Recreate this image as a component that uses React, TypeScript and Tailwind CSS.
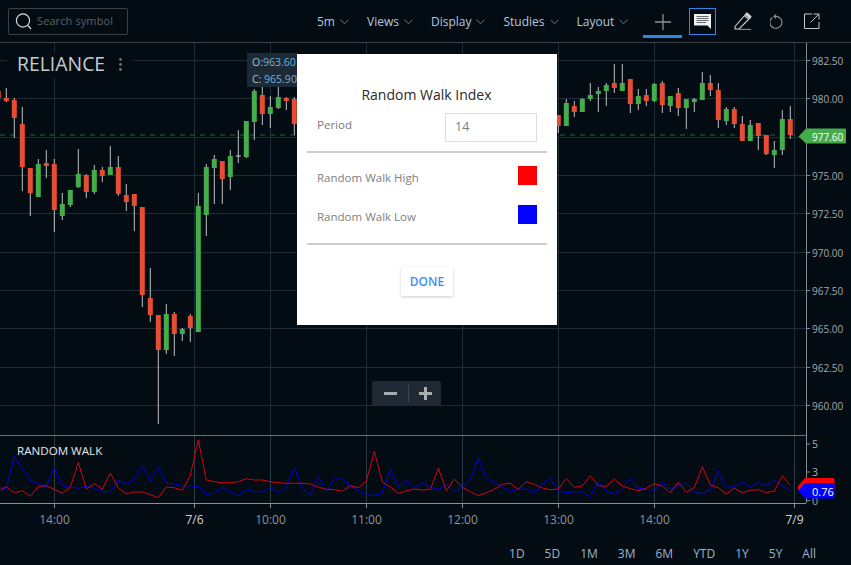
import React from "react";

const G = "#45ac4b";
const R = "#e74c34";
// [center x, colour, wick top, body top, body bottom, wick bottom]
const candles: [number, string, number, number, number, number][] = [
  [-1.7, R, 88, 91, 98, 98],
  [6.3, R, 88, 98, 101, 102],
  [14.3, R, 98, 100, 118, 138],
  [22.3, R, 107, 124, 167, 191],
  [30.3, R, 168, 168, 193, 216],
  [38.3, G, 159, 164, 197, 197],
  [46.3, R, 150, 163, 166, 178],
  [54.3, R, 159, 164, 210, 232],
  [62.3, G, 193, 204, 216, 220],
  [70.3, G, 190, 190, 205, 207],
  [78.3, G, 149, 174, 187, 188],
  [86.3, R, 174, 175, 192, 198],
  [94.3, G, 165, 170, 192, 194],
  [102.3, R, 167, 170, 176, 182],
  [110.3, G, 146, 167, 175, 175],
  [118.3, R, 156, 167, 194, 196],
  [126.3, R, 184, 195, 202, 211],
  [134.3, R, 194, 194, 206, 231],
  [142.3, R, 207, 207, 295, 307],
  [150.3, R, 268, 298, 315, 322],
  [158.3, R, 315, 315, 350, 424],
  [166.3, G, 304, 314, 350, 354],
  [174.3, R, 312, 314, 334, 356],
  [182.3, G, 328, 329, 334, 341],
  [190.3, R, 314, 316, 328, 342],
  [198.3, G, 193, 206, 332, 332],
  [206.3, G, 164, 167, 215, 236],
  [214.3, G, 155, 159, 168, 204],
  [222.3, R, 161, 161, 179, 204],
  [230.3, G, 150, 156, 177, 190],
  [238.3, "#dddddd", 130, 156, 157, 163],
  [246.3, G, 121, 121, 157, 158],
  [254.3, G, 89, 91, 122, 140],
  [262.3, R, 87, 95, 114, 125],
  [270.3, G, 96, 107, 114, 128],
  [278.3, G, 85, 97, 108, 109],
  [286.3, R, 97, 98, 101, 110],
  [294.3, R, 97, 99, 124, 135],
  [558.3, R, 115, 115, 126, 133],
  [566.3, G, 99, 103, 126, 126],
  [574.3, R, 101, 106, 112, 117],
  [582.3, G, 98, 99, 112, 112],
  [590.3, G, 83, 95, 99, 101],
  [598.3, G, 87, 91, 94, 112],
  [606.3, G, 83, 85, 91, 106],
  [614.3, R, 64, 83, 88, 93],
  [622.3, G, 64, 83, 91, 91],
  [630.3, R, 79, 79, 104, 113],
  [638.3, G, 89, 96, 104, 110],
  [646.3, R, 89, 95, 101, 106],
  [654.3, G, 83, 84, 101, 102],
  [662.3, R, 81, 83, 105, 113],
  [670.3, G, 96, 96, 106, 112],
  [678.3, R, 88, 93, 108, 116],
  [686.3, G, 99, 99, 108, 129],
  [694.3, G, 98, 99, 102, 112],
  [702.3, G, 72, 83, 100, 100],
  [710.3, R, 75, 83, 90, 96],
  [718.3, R, 83, 90, 120, 128],
  [726.3, G, 107, 109, 121, 125],
  [734.3, R, 107, 109, 124, 128],
  [742.3, R, 116, 124, 141, 141],
  [750.3, G, 120, 125, 141, 141],
  [758.3, R, 123, 123, 136, 150],
  [766.3, R, 135, 135, 154, 155],
  [774.3, G, 141, 150, 155, 168],
  [782.3, G, 110, 119, 150, 155],
  [790.3, R, 106, 119, 135, 139],
];

const redA = [183,170,188,182,199,169,167,178,190,172,97,177,161,177,129,175,191,186,186,194,203,171,173,181,136,30,150,155,158,158,155,146,150,150,155,158,160,160,160,162,171,178,179,184,167,173,154,64,156,171,190,183,177,180];
const blueA = [172,176,78,115,152,162,171,110,167,170,175,169,174,184,186,150,161,149,105,152,110,160,162,167,167,170,193,190,174,186,197,179,185,185,172,188,170,111,174,196,140,185,147,147,168,181,195,196,189,118,170,153,172,158];
const redB = [178,115,182,147,172,185,197,188,178,163,160,178,155,163,174,179,177,146,172,168,137,167,169,147,168,176,182,175,161,168,188,157,187,173,110,165,173,192,174,188,181,179,188,183,137,167];
const blueB = [172,181,162,184,170,150,82,146,156,172,184,177,178,188,163,145,182,188,185,186,200,155,182,192,175,145,175,178,181,157,178,165,159,185,192,178,121,172,170,155,171,157,167,151,167,182];

const pts = (a: number[], b: number[]) =>
  [
    ...a.map((v, i) => [(-5 + 24 * i) / 3, 430 + v / 3]),
    ...b.map((v, i) => [430 + (1 + 24 * i) / 3, 430 + v / 3]),
  ]
    .map(([x, y]) => `${x.toFixed(1)},${y.toFixed(1)}`)
    .join(" ");

const hLines = [60.5, 98.5, 137.5, 175.5, 213.5, 252.5, 290.5, 328.5, 367.5, 405.5];
const vLines = [54.5, 194.5, 270.5, 366.5, 462.5, 558.5, 654.5, 794.5];
const prices: [string, number][] = [
  ["982.50", 61],
  ["980.00", 99],
  ["975.00", 176],
  ["972.50", 214],
  ["970.00", 253],
  ["967.50", 291],
  ["965.00", 329],
  ["962.50", 368],
  ["960.00", 406],
];
const times: [string, number, boolean][] = [
  ["14:00", 54.5, false],
  ["7/6", 194.5, true],
  ["10:00", 270.5, false],
  ["11:00", 366.5, false],
  ["12:00", 462.5, false],
  ["13:00", 558.5, false],
  ["14:00", 654.5, false],
  ["7/9", 794.5, true],
];

function Chevron() {
  return (
    <svg width="9" height="6" viewBox="0 0 9 6" fill="none" stroke="#6f7a84" strokeWidth="1">
      <path d="M0.5 0.8 4.5 4.8 8.5 0.8" />
    </svg>
  );
}

function Menu({ label }: { label: string }) {
  return (
    <div className="flex items-center gap-[5px] text-[12px] text-[#b4c8dc]">
      <span>{label}</span>
      <Chevron />
    </div>
  );
}

function Chart() {
  return (
    <svg width="851" height="490" viewBox="0 43 851 490" className="block" fontFamily="'Open Sans', sans-serif">
      {hLines.map((y) => (
        <line key={y} x1="0" x2="806" y1={y} y2={y} stroke="#1e2c37" />
      ))}
      {vLines.map((x) => (
        <g key={x}>
          <line x1={x} x2={x} y1="43" y2="435" stroke="#1e2c37" />
          <line x1={x} x2={x} y1="436" y2="503" stroke="#2a3a46" />
          <line x1={x} x2={x} y1="503" y2="508" stroke="#8b8f93" />
        </g>
      ))}
      <rect x="7" y="53" width="126" height="25" fill="#030b13" />
      <line x1="0" x2="806" y1="135" y2="135" stroke="#2f6238" strokeDasharray="5 5" />

      {candles.map(([x, c, wt, bt, bb, wb]) => (
        <g key={x}>
          <line x1={x} x2={x} y1={wt} y2={wb} stroke="#d6d6d6" strokeWidth="0.9" />
          {c === "#dddddd" ? (
            <line x1={x - 2.5} x2={x + 2.5} y1={bt} y2={bt} stroke="#d6d6d6" />
          ) : (
            <rect x={x - 2.5} y={bt} width="5" height={bb - bt} fill={c} />
          )}
        </g>
      ))}

      <line x1="0" x2="806" y1="435.5" y2="435.5" stroke="#6b6f72" />
      <line x1="0" x2="806" y1="503.5" y2="503.5" stroke="#8b8f93" />
      <line x1="806.5" x2="806.5" y1="43" y2="503" stroke="#85898c" />
      <line x1="0" x2="851" y1="533.5" y2="533.5" stroke="#33393d" />

      <polyline points={pts(blueA, blueB)} fill="none" stroke="#0000e6" strokeWidth="1" />
      <polyline points={pts(redA, redB)} fill="none" stroke="#dc0010" strokeWidth="1" />

      {prices.map(([t, y]) => (
        <g key={t}>
          <line x1="806" x2="810" y1={y - 0.5} y2={y - 0.5} stroke="#85898c" />
          <text x="812" y={y + 4} fontSize="10" fill="#a5a9ad">
            {t}
          </text>
        </g>
      ))}
      {[
        ["5", 444],
        ["3", 472],
        ["0", 500.5],
      ].map(([t, y]) => (
        <g key={t as string}>
          <line x1="806" x2="810" y1={y} y2={y} stroke="#85898c" />
          <text x="812" y={(y as number) + 4} fontSize="10.5" fill="#a5a9ad">
            {t}
          </text>
        </g>
      ))}

      <path d="M798.5 136.5 806 128.5H845Q846 128.5 846 130V142Q846 143.5 845 143.5H806Z" fill="#45ac4b" />
      <text x="812" y="140.5" fontSize="10" fill="#ffffff">
        977.60
      </text>

      <path d="M798 486 805 478H833Q834.5 478 834.5 480V490H798Z" fill="#ff0000" />
      <path d="M798 491 805 483H833Q834.5 483 834.5 485V497Q834.5 498.5 833 498.5H805Z" fill="#0000ff" />
      <text x="812" y="496" fontSize="11" fill="#ffffff">
        0.76
      </text>

      {times.map(([t, x, strong]) => (
        <text key={t + x} x={x} y="524" textAnchor="middle" fontSize="12" fill={strong ? "#d4d6d8" : "#8f9396"}>
          {t}
        </text>
      ))}

      <text x="17" y="71" fontSize="19.4" fill="#c8cbce">
        RELIANCE
      </text>
      <circle cx="120.5" cy="59.5" r="1.4" fill="#6d7276" />
      <circle cx="120.5" cy="64.5" r="1.4" fill="#6d7276" />
      <circle cx="120.5" cy="69.5" r="1.4" fill="#6d7276" />
      <text x="17" y="455" fontSize="11.6" fill="#e6e8ea">
        RANDOM WALK
      </text>
    </svg>
  );
}

export default function App() {
  return (
    <div className="relative flex h-[565px] w-[851px] flex-col overflow-hidden bg-[#030b13] font-['Open_Sans',sans-serif]">
      <header className="flex h-[43px] shrink-0 items-center border-b border-[#3a4044] pl-2">
        <div className="flex h-[27px] w-[120px] items-center gap-[5px] rounded-[2px] border border-[#3a4248] pl-[6px]">
          <svg width="17" height="19" viewBox="0 0 17 19" fill="none" stroke="#d8dadc" strokeWidth="1.2">
            <circle cx="8" cy="8.5" r="6.6" />
            <path d="M13 13.5 16 17" />
          </svg>
          <span className="text-[11px] tracking-[0.1px] text-[#5c6266]">Search symbol</span>
        </div>
        <nav className="ml-[189px] mt-[1px] flex items-center gap-[18px]">
          <Menu label="5m" />
          <Menu label="Views" />
          <Menu label="Display" />
          <Menu label="Studies" />
          <Menu label="Layout" />
        </nav>
        <div className="ml-[15px] flex h-[38px] w-[39px] items-start justify-center self-start border-b-[3px] border-[#2f86e6] pt-[14px]">
          <svg width="16" height="16" viewBox="0 0 16 16" stroke="#8d9296" strokeWidth="1.3">
            <path d="M8 0V16M0 8H16" />
          </svg>
        </div>
        <div className="ml-[7px] flex h-[27px] w-[27px] items-center justify-center border border-[#2f86e6]">
          <svg width="17" height="15" viewBox="0 0 17 15">
            <path d="M0 0H17V15L13.5 11.5H0Z" fill="#eef0f2" />
            <path d="M2.5 2.5H14.5M2.5 4.5H14.5M2.5 6.5H14.5M2.5 8.5H12" stroke="#63686d" strokeWidth="1" />
          </svg>
        </div>
        <svg className="ml-[18px]" width="18" height="18" viewBox="0 0 18 18" fill="none" stroke="#d2d4d6" strokeWidth="1.1">
          <path d="M1 14.5 11.5 2.5 16 6 5 17H1Z" />
          <path d="M10.5 3.8 14.8 7.2" />
          <path d="M5 17.4H17" stroke="#8d9296" />
          <path d="M11.5 2.5 13 1 17 4.5 16 6Z" fill="#d2d4d6" />
        </svg>
        <svg className="ml-[18px]" width="14" height="15" viewBox="0 0 14 15" fill="none" stroke="#8d9296" strokeWidth="1.1">
          <path d="M2.3 3.5A6 6 0 1 0 7 2.4H4.5" />
          <path d="M6 0.4 4 2.4 6 4.4" />
        </svg>
        <svg className="ml-[20px]" width="16" height="16" viewBox="0 0 16 16" fill="none" stroke="#c4c8cb" strokeWidth="1">
          <path d="M8 1H0.5V15.5H15V9" />
          <path d="M6.5 9.5 14.5 1.5M9.5 1H15V6.5" />
        </svg>
      </header>

      <Chart />

      <footer className="flex flex-1 items-center justify-end gap-5 pr-[35px] pt-[9px] text-[12px] text-[#9cb4ca]">
        {["1D", "5D", "1M", "3M", "6M", "YTD", "1Y", "5Y", "All"].map((t) => (
          <span key={t}>{t}</span>
        ))}
      </footer>

      <div className="absolute left-[247px] top-[53px] h-[34px] w-[50px] overflow-hidden whitespace-nowrap bg-[#1a2a36] pl-[5px] pt-[1px] text-[10.5px] leading-[17px] text-[#79aedb]">
        <div>
          <span className="text-[#b8bcc0]">O:</span>963.60
        </div>
        <div>
          <span className="text-[#b8bcc0]">C:</span> 965.90
        </div>
      </div>

      <div className="absolute left-[372px] top-[381px] flex h-[25px] w-[69px] items-center rounded-[2px] bg-[#1e2933]">
        <div className="flex w-[36px] items-center justify-center">
          <div className="h-[3px] w-[13px] bg-[#a9adb0]" />
        </div>
        <div className="h-[17px] w-px bg-[#3c474f]" />
        <div className="flex flex-1 items-center justify-center">
          <svg width="13" height="13" viewBox="0 0 13 13" stroke="#a9adb0" strokeWidth="3">
            <path d="M6.5 0V13M0 6.5H13" />
          </svg>
        </div>
      </div>

      <div className="absolute left-[297px] top-[54px] flex h-[271px] w-[260px] flex-col bg-white px-[10px] pt-[31px]">
        <h2 className="-ml-[1px] text-center text-[14px] leading-[19px] text-[#2a2a2a]">Random Walk Index</h2>
        <div className="mt-[9px] flex h-[29px] items-start justify-between px-[10px]">
          <span className="text-[11.5px] leading-[24px] text-[#777]">Period</span>
          <div className="flex h-[29px] w-[92px] items-center border border-[#ddd] pl-[9px] text-[12.5px] text-[#6f7f90]">14</div>
        </div>
        <div className="mt-[9px] h-[2px] bg-[#ccc]" />
        <div className="mt-[13px] flex h-[19px] items-center justify-between px-[10px]">
          <span className="pt-[4px] text-[11.5px] text-[#808080]">Random Walk High</span>
          <div className="h-[19px] w-[19px] bg-[#ff0000]" />
        </div>
        <div className="mt-[20px] flex h-[19px] items-center justify-between px-[10px]">
          <span className="pt-[4px] text-[11.5px] text-[#808080]">Random Walk Low</span>
          <div className="h-[19px] w-[19px] bg-[#0000ff]" />
        </div>
        <div className="mt-[19px] h-[2px] bg-[#ccc]" />
        <div className="mt-[22px] flex justify-center">
          <button className="h-[29px] w-[52px] rounded-[1px] bg-white text-[12px] font-semibold text-[#3f8ff0] shadow-[0_1px_3px_rgba(0,0,0,0.2)]">
            DONE
          </button>
        </div>
      </div>
    </div>
  );
}
